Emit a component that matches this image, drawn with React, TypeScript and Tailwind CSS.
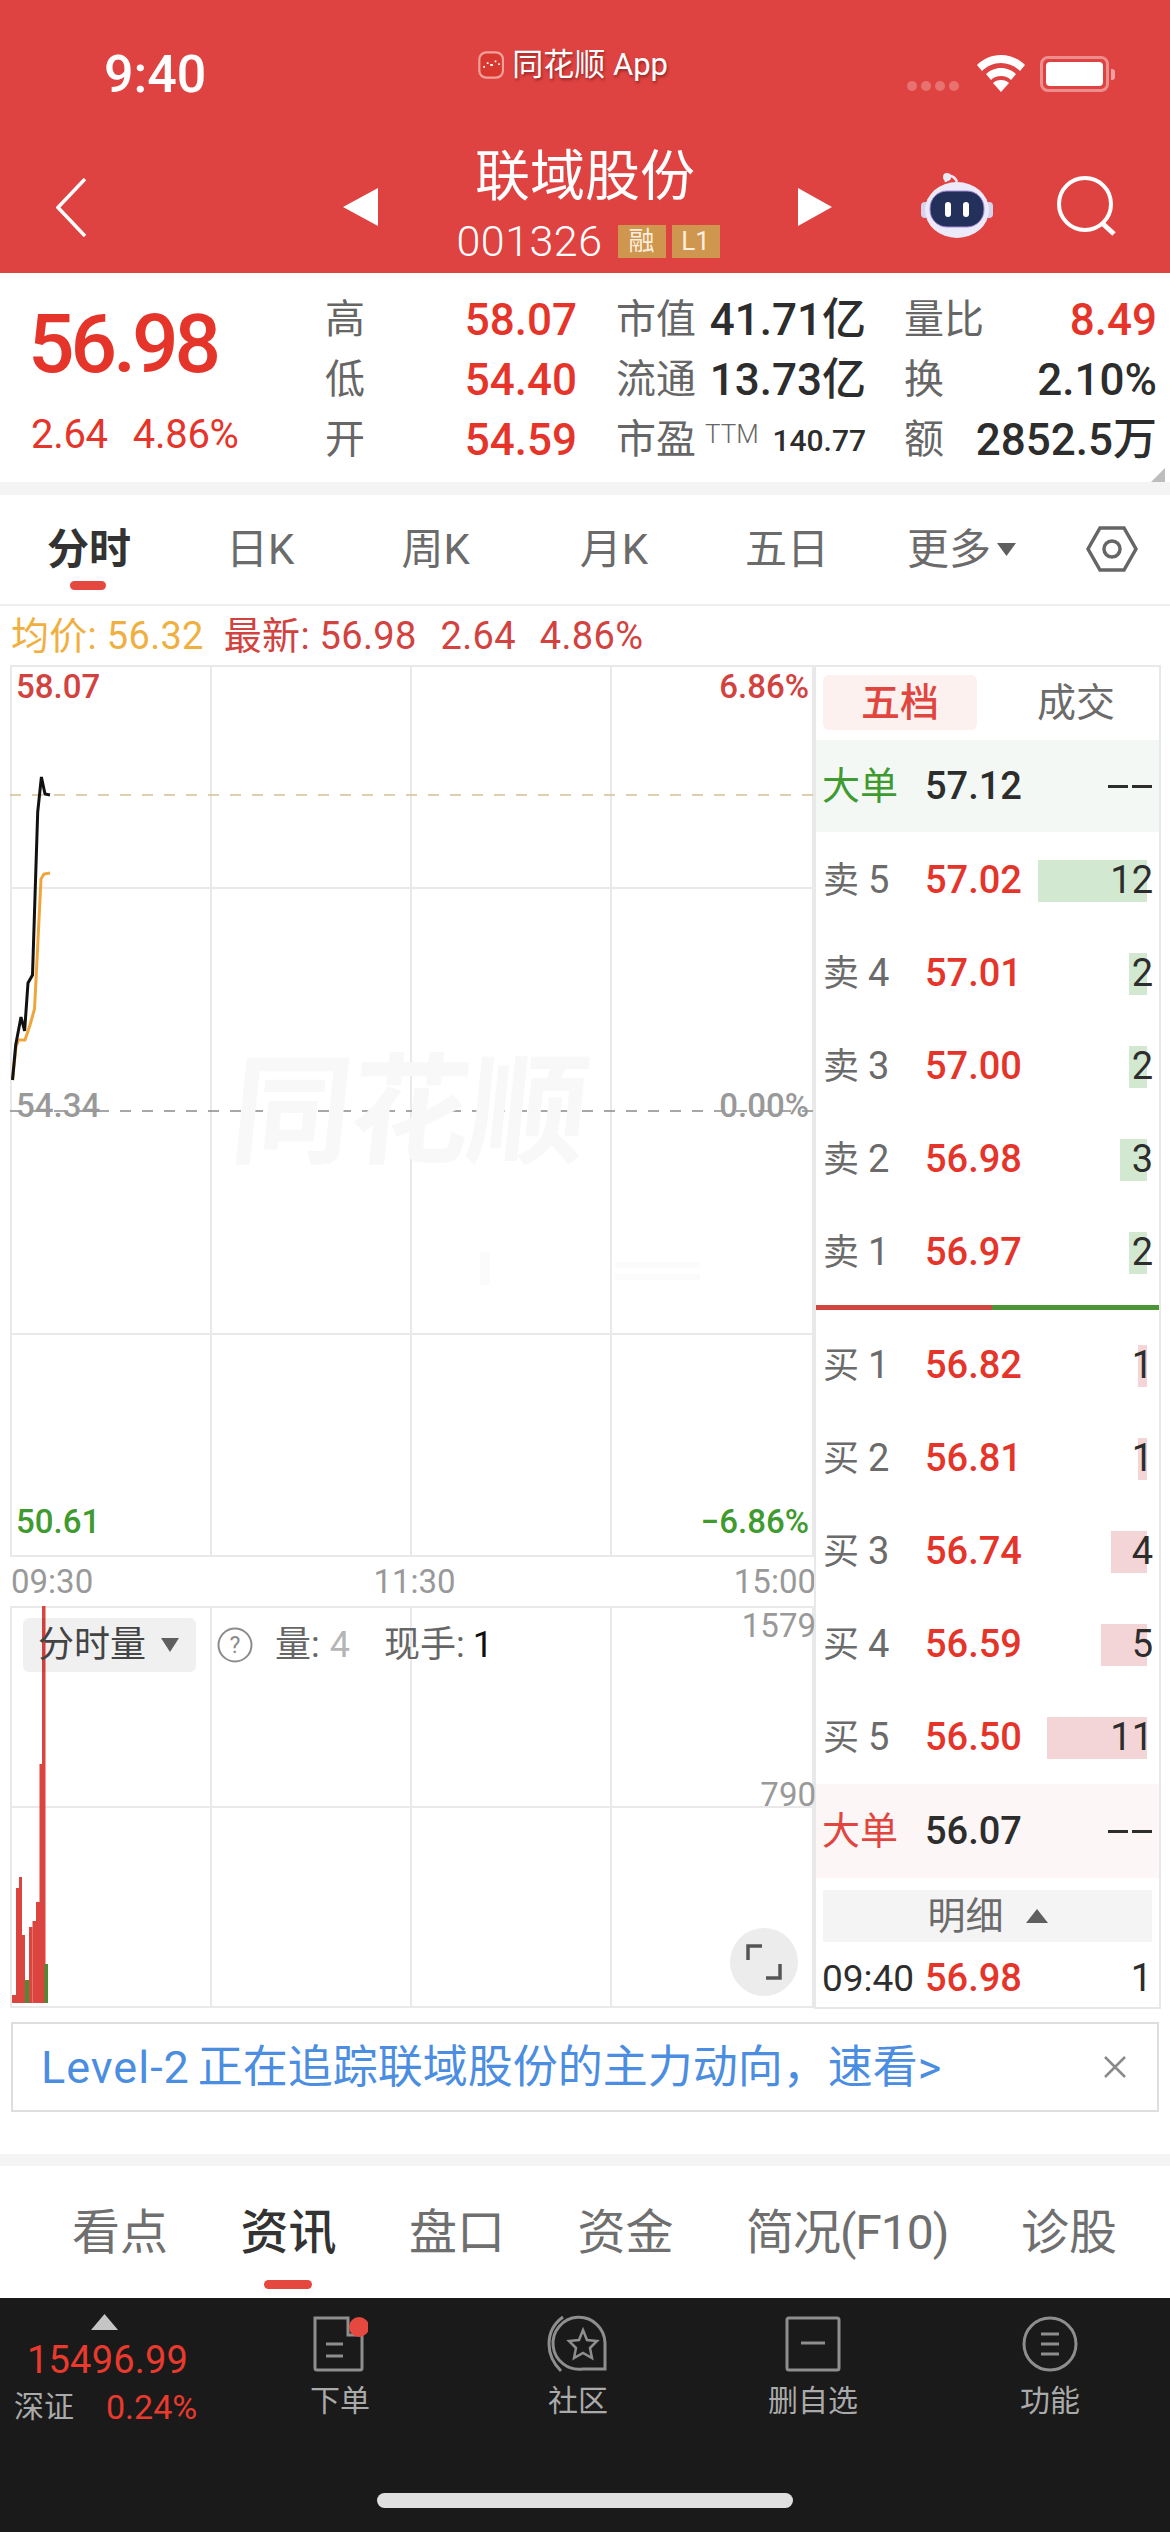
const sans = "font-['Roboto','Noto_Sans_CJK_SC',sans-serif]";

const sells = [
  { label: "卖", n: "5", price: "57.02", vol: "12", bar: 109 },
  { label: "卖", n: "4", price: "57.01", vol: "2", bar: 18 },
  { label: "卖", n: "3", price: "57.00", vol: "2", bar: 18 },
  { label: "卖", n: "2", price: "56.98", vol: "3", bar: 27 },
  { label: "卖", n: "1", price: "56.97", vol: "2", bar: 18 },
];

const buys = [
  { label: "买", n: "1", price: "56.82", vol: "1", bar: 9 },
  { label: "买", n: "2", price: "56.81", vol: "1", bar: 9 },
  { label: "买", n: "3", price: "56.74", vol: "4", bar: 36 },
  { label: "买", n: "4", price: "56.59", vol: "5", bar: 46 },
  { label: "买", n: "5", price: "56.50", vol: "11", bar: 100 },
];

const volumeBars = [
  { x: 12, w: 4.5, top: 1995, c: "#dc4440" },
  { x: 16, w: 4, top: 1888, c: "#dc4440" },
  { x: 19, w: 3, top: 1877, c: "#dc4440" },
  { x: 21.5, w: 3.5, top: 1935, c: "#dc4440" },
  { x: 25, w: 4, top: 1980, c: "#4d8a35" },
  { x: 29, w: 3.5, top: 1927, c: "#dc4440" },
  { x: 32.5, w: 3.5, top: 1921, c: "#dc4440" },
  { x: 36, w: 4, top: 1902, c: "#dc4440" },
  { x: 39.5, w: 3.5, top: 1764, c: "#dc4440" },
  { x: 42, w: 3.5, top: 1606, c: "#dc4440" },
  { x: 44.5, w: 3.5, top: 1964, c: "#4d8a35" },
];

function BookRow({ row, green }: { row: (typeof sells)[number]; green: boolean }) {
  return (
    <div className="relative flex h-[93px] items-center pl-[7px]">
      <div
        className={`absolute right-[12px] top-[26px] h-[42px] ${green ? "bg-[#d3e8d0]" : "bg-[#f3d5d7]"}`}
        style={{ width: row.bar }}
      />
      <span className="relative w-[102px] text-[36px] text-[#6b6b6b]">
        {row.label}
        <span className="ml-[9px] text-[38px]">{row.n}</span>
      </span>
      <span className="relative text-[38px] font-medium text-[#e5352b]">{row.price}</span>
      <span className="relative ml-auto pr-[6px] text-[38px] text-[#2d2d2d]">{row.vol}</span>
    </div>
  );
}

function BigOrder({ label, price, className, labelColor }: { label: string; price: string; className: string; labelColor: string }) {
  return (
    <div className={`flex items-center pl-[6px] ${className}`}>
      <span className={`w-[103px] text-[38px] ${labelColor}`}>{label}</span>
      <span className="text-[38px] font-medium text-[#2d2d2d]">{price}</span>
      <div className="ml-auto flex gap-[4px] pr-[7px]">
        <div className="h-[3px] w-[20px] bg-[#2d2d2d]" />
        <div className="h-[3px] w-[20px] bg-[#2d2d2d]" />
      </div>
    </div>
  );
}

function OrderBook() {
  return (
    <div className="flex w-[347px] flex-col border-r-2 border-t-2 border-b-2 border-[#e8e8e8] border-l-2">
      <div className="flex h-[73px] pl-[7px] pt-[8px]">
        <div className="flex h-[55px] w-[154px] items-center justify-center rounded-[6px] bg-[#fdf1ef] text-[39px] font-medium text-[#e0463f]">
          五档
        </div>
        <div className="flex h-[55px] flex-1 items-center justify-center pl-[16px] text-[39px] text-[#6b6b6b]">成交</div>
      </div>
      <BigOrder label="大单" price="57.12" className="h-[92px] bg-[#f3f8f5]" labelColor="text-[#3f9a2f]" />
      <div className="pt-[2px]">
        {sells.map((r) => (
          <BookRow key={r.n} row={r} green />
        ))}
      </div>
      <div className="mt-[6px] flex h-[5px]">
        <div className="w-[176px] bg-[#d2453f]" />
        <div className="flex-1 bg-[#4a9535]" />
      </div>
      <div className="pt-[9px]">
        {buys.map((r) => (
          <BookRow key={r.n} row={r} green={false} />
        ))}
      </div>
      <BigOrder label="大单" price="56.07" className="h-[94px] bg-[#fdf6f6]" labelColor="text-[#e0463f]" />
      <div className="mx-[7px] mt-[12px] flex h-[52px] items-center justify-center gap-[22px] bg-[#f4f4f4] text-[38px] text-[#6b6b6b]">
        <span>明细</span>
        <svg width="22" height="14" viewBox="0 0 22 14"><path d="M11 0 22 14H0z" fill="#5f5f5f" /></svg>
      </div>
      <div className="flex flex-1 items-center pl-[6px] pt-[8px] text-[37px]">
        <span className="w-[103px] text-[#2d2d2d]">09:40</span>
        <span className="text-[38px] font-medium text-[#e5352b]">56.98</span>
        <span className="ml-auto pr-[7px] text-[38px] text-[#2d2d2d]">1</span>
      </div>
    </div>
  );
}

function PriceChart() {
  return (
    <div className="relative h-[892px]">
      <svg className="block" width="804" height="892" viewBox="10 665 804 892">
        <g stroke="#e9e9e9" strokeWidth="2" fill="none">
          <rect x="11" y="666" width="802" height="890" />
          <path d="M211 665V1557M411 665V1557M611 665V1557M10 888H814M10 1334H814" />
        </g>
        <path d="M480 1252h10v33h-10zM615 1262h85v6h-85zM615 1274h85v6h-85z" fill="#fbfbfb" />
        <path d="M10 795H814" stroke="#d4c096" strokeWidth="1.5" strokeDasharray="11 11" />
        <path d="M10 1111H814" stroke="#8a8a8a" strokeWidth="1.5" strokeDasharray="11 11" />
        <path
          d="M12.5 1080 16 1047 18.5 1040 25 1040 30 1025 34.5 1009 37 960 41 879 44 874 50 873"
          fill="none"
          stroke="#eea63c"
          strokeWidth="3"
        />
        <path
          d="M12.5 1080 15.7 1045 21 1017 24.6 1031 28 983 32.5 975 37.7 812 41.4 777 45 794 50 795"
          fill="none"
          stroke="#111"
          strokeWidth="3"
        />
      </svg>
      <div className="absolute left-[222px] top-[388px] skew-x-[-6deg] text-[120px] font-bold leading-none tracking-[-2px] text-[#f8f8f8]">
        同花顺
      </div>
      <span className="absolute left-[6px] top-[2px] text-[33px] font-medium leading-[40px] text-[#d2423f]">58.07</span>
      <span className="absolute right-[5px] top-[2px] text-[33px] font-medium leading-[40px] text-[#d2423f]">6.86%</span>
      <span className="absolute left-[6px] top-[421px] text-[33px] font-medium leading-[40px] text-[#999]">54.34</span>
      <span className="absolute right-[5px] top-[421px] text-[33px] font-medium leading-[40px] text-[#999]">0.00%</span>
      <span className="absolute left-[6px] top-[837px] text-[33px] font-medium leading-[40px] text-[#3f9a2f]">50.61</span>
      <span className="absolute right-[5px] top-[837px] text-[33px] font-medium leading-[40px] text-[#3f9a2f]">−6.86%</span>
    </div>
  );
}

function VolumeChart() {
  return (
    <div className="relative h-[402px]">
      <svg className="block" width="804" height="402" viewBox="10 1606 804 402">
        <g stroke="#e9e9e9" strokeWidth="2" fill="none">
          <rect x="11" y="1607" width="802" height="400" />
          <path d="M211 1606V2008M411 1606V2008M611 1606V2008M10 1807H814" />
        </g>
        {volumeBars.map((b) => (
          <rect key={b.x} x={b.x} y={b.top} width={b.w} height={2003 - b.top} fill={b.c} />
        ))}
      </svg>
      <div className="absolute left-[13px] top-[12px] flex h-[54px] w-[173px] items-center gap-[15px] rounded-[6px] bg-[#000]/[0.06] pl-[15px] text-[36px] text-[#444]">
        <span>分时量</span>
        <svg width="18" height="14" viewBox="0 0 18 14"><path d="M0 0H18L9 14z" fill="#5f5f5f" /></svg>
      </div>
      <div className="absolute left-[207px] top-[19px] flex items-center text-[36px] leading-[40px] text-[#666]">
        <svg width="36" height="36" viewBox="0 0 36 36">
          <circle cx="18" cy="18" r="16.5" fill="none" stroke="#8c8c8c" strokeWidth="2" />
          <text x="18" y="26" fontSize="23" textAnchor="middle" fill="#8c8c8c">?</text>
        </svg>
        <span className="ml-[22px]">量:</span>
        <span className="ml-[10px] text-[#b5b5b5]">4</span>
        <span className="ml-[34px]">现手:</span>
        <span className="ml-[8px] text-[#111]">1</span>
      </div>
      <span className="absolute right-[-2px] top-[0px] text-[33px] leading-[40px] text-[#999]">1579</span>
      <span className="absolute right-[-2px] top-[169px] text-[33px] leading-[40px] text-[#999]">790</span>
      <div className="absolute left-[720px] top-[322px] flex h-[68px] w-[68px] items-center justify-center rounded-full bg-[#ececec]">
        <svg width="36" height="36" viewBox="0 0 36 36" fill="none" stroke="#555" strokeWidth="3.5">
          <path d="M2 16V2H16M34 20V34H20" />
        </svg>
      </div>
    </div>
  );
}

function StatusBar() {
  return (
    <div className="flex h-[136px]">
      <span className="ml-[104px] mt-[45px] h-[60px] w-[102px] shrink-0 whitespace-nowrap text-[52px] font-medium leading-[60px] text-white">9:40</span>
      <div className="ml-[272px] mt-[47px] flex h-[36px] w-[190px] shrink-0 items-center gap-[8px] text-white">
        <svg width="30" height="32" viewBox="0 0 30 32">
          <rect x="1.5" y="1.5" width="27" height="29" rx="8" fill="#d8382f" stroke="#f3a09b" strokeWidth="2.5" />
          <path d="M6 18h2M10 14h2M14 16h3M19 12h2M23 15h2" stroke="#fff" strokeWidth="2" />
        </svg>
        <span className="whitespace-nowrap text-[31px] [text-shadow:1px_2px_3px_rgba(90,20,20,0.6)]">同花顺 App</span>
      </div>
      <div className="ml-[239px] mt-[81px] flex h-[10px] gap-[4px]">
        <i className="h-[10px] w-[10px] rounded-full bg-white/25" />
        <i className="h-[10px] w-[10px] rounded-full bg-white/25" />
        <i className="h-[10px] w-[10px] rounded-full bg-white/25" />
        <i className="h-[10px] w-[10px] rounded-full bg-white/25" />
      </div>
      <svg className="ml-[17px] mt-[55px]" width="50" height="37" viewBox="0 0 50 37" fill="#fff">
        <path d="M25 0C15.5 0 7 4 1 10l5 6c5-5 11.500-8 19-8s14 3 19 8l5-6C43 4 34.500 0 25 0z" />
        <path d="M25 13c-6 0-11 2.500-15 6l5 6c2.500-2.500 6-4 10-4s7.500 1.500 10 4l5-6c-4-3.500-9-6-15-6z" />
        <path d="M25 25c-3.500 0-6 1-8 3l8 9 8-9c-2-2-4.500-3-8-3z" />
      </svg>
      <div className="ml-[14px] mt-[56px] flex h-[36px] items-center">
        <div className="h-[36px] w-[69px] rounded-[8px] border-[3px] border-white/40 p-[3px]">
          <div className="h-full w-full rounded-[4px] bg-white" />
        </div>
        <div className="ml-[2px] h-[11px] w-[4px] rounded-r-[3px] bg-white/50" />
      </div>
    </div>
  );
}

function NavBar() {
  return (
    <div className="flex h-[137px]">
      <svg className="ml-[56px] mt-[42px]" width="30" height="59" viewBox="0 0 30 59" fill="none" stroke="#fff" strokeWidth="3.5">
        <path d="M29 1 2 29.500 29 58" />
      </svg>
      <svg className="ml-[257px] mt-[52px]" width="35" height="38" viewBox="0 0 35 38" fill="#fff">
        <path d="M35 0V38L0 19z" />
      </svg>
      <div className="flex w-[420px] flex-col items-center text-white">
        <span className="-ml-[6px] h-[76px] pt-[6px] text-[55px] leading-[68px]">联域股份</span>
        <div className="mt-[13px] flex h-[33px] items-center">
          <span className="text-[43px] font-light leading-[33px] tracking-[0.5px]">001326</span>
          <span className="ml-[15px] flex h-[33px] w-[48px] shrink-0 items-center justify-center bg-[#cf9650] text-[26px] text-[#fbeedd]">融</span>
          <span className="ml-[6px] flex h-[33px] w-[48px] shrink-0 items-center justify-center bg-[#cf9650] text-[26px] text-[#fbeedd]">L1</span>
        </div>
      </div>
      <svg className="mt-[52px]" width="34" height="38" viewBox="0 0 34 38" fill="#fff">
        <path d="M0 0V38L34 19z" />
      </svg>
      <svg className="ml-[89px] mt-[36px]" width="72" height="66" viewBox="0 0 72 66">
        <path d="M25 10C24 5 27 3 30 4s5 3 6 6" fill="none" stroke="#e8e6f5" strokeWidth="2.5" />
        <circle cx="26" cy="5" r="4" fill="#eceaf6" />
        <rect x="0" y="30" width="8" height="16" rx="4" fill="#d5d3ee" />
        <rect x="64" y="30" width="8" height="16" rx="4" fill="#d5d3ee" />
        <ellipse cx="36" cy="38" rx="32" ry="28" fill="#eceaf8" />
        <rect x="9" y="19" width="54" height="36" rx="17" fill="#22305a" stroke="#a78bdc" strokeWidth="1" />
        <rect x="24" y="30" width="6" height="15" rx="3" fill="#fff" />
        <rect x="42" y="30" width="6" height="15" rx="3" fill="#fff" />
      </svg>
      <svg className="ml-[63px] mt-[40px]" width="62" height="60" viewBox="0 0 62 60" fill="none" stroke="#fff">
        <circle cx="29" cy="28" r="26" strokeWidth="4" />
        <path d="M46 47 58 58" strokeWidth="5" />
      </svg>
    </div>
  );
}

function StatRow({ children }: { children: React.ReactNode }) {
  return <div className="grid h-[60px] grid-cols-[291px_288px_253px] items-center">{children}</div>;
}

function QuoteInfo() {
  const label = "text-[40px] text-[#666]";
  const red = "text-[44px] font-medium text-[#e5352b]";
  const dark = "text-[44px] font-medium text-[#2d2d2d]";
  const cell = "flex items-center justify-between whitespace-nowrap";
  return (
    <div className="relative flex h-[209px] bg-white">
      <div className="w-[325px] shrink-0 pl-[31px]">
        <div className="-ml-[3px] mt-[29px] text-[82px] font-medium leading-[84px] tracking-[-4px] text-[#e5352b]">56.98</div>
        <div className="mt-[25px] flex gap-[25px] text-[40px] leading-[48px] tracking-[-0.3px] text-[#e5352b]">
          <span>2.64</span>
          <span>4.86%</span>
        </div>
      </div>
      <div className="pt-[14px]">
        <StatRow>
          <div className={`${cell} w-[252px]`}><span className={label}>高</span><span className={red}>58.07</span></div>
          <div className={`${cell} w-[250px]`}><span className={label}>市值</span><span className={dark}>41.71亿</span></div>
          <div className={`${cell} w-[253px]`}><span className={label}>量比</span><span className={red}>8.49</span></div>
        </StatRow>
        <StatRow>
          <div className={`${cell} w-[252px]`}><span className={label}>低</span><span className={red}>54.40</span></div>
          <div className={`${cell} w-[250px]`}><span className={label}>流通</span><span className={dark}>13.73亿</span></div>
          <div className={`${cell} w-[253px]`}><span className={label}>换</span><span className={dark}>2.10%</span></div>
        </StatRow>
        <StatRow>
          <div className={`${cell} w-[252px]`}><span className={label}>开</span><span className={red}>54.59</span></div>
          <div className={`${cell} w-[250px]`}>
            <span className={label}>
              市盈
              <span className="ml-[9px] align-[10px] text-[26px] font-light">TTM</span>
            </span>
            <span className="text-[30px] font-medium text-[#2d2d2d]">140.77</span>
          </div>
          <div className={`${cell} w-[253px]`}><span className={label}>额</span><span className={dark}>2852.5万</span></div>
        </StatRow>
      </div>
      <div className="absolute bottom-0 right-[5px] h-0 w-0 border-b-[14px] border-l-[14px] border-b-[#bdbdbd] border-l-transparent" />
    </div>
  );
}

function ChartTabs() {
  const tabs = [
    { t: "日K", w: "ml-[95px]" },
    { t: "周K", w: "ml-[107px]" },
    { t: "月K", w: "ml-[110px]" },
    { t: "五日", w: "ml-[97px]" },
  ];
  return (
    <div className="flex h-[111px] items-center border-b-2 border-[#eeeeee] text-[#6b6b6b]">
      <div className="relative ml-[47px] text-[42px] font-bold text-[#333]">
        分时
        <div className="absolute left-[23px] top-[63px] h-[9px] w-[36px] rounded-full bg-[#e4483f]" />
      </div>
      {tabs.map((tab) => (
        <span key={tab.t} className={`${tab.w} text-[42px]`}>{tab.t}</span>
      ))}
      <span className="ml-[78px] text-[42px]">更多</span>
      <svg className="ml-[6px]" width="19" height="13" viewBox="0 0 19 13"><path d="M0 0H19L9.500 13z" fill="#5f5f5f" /></svg>
      <svg className="ml-[70px]" width="52" height="46" viewBox="0 0 52 46" fill="none" stroke="#666" strokeWidth="3.5">
        <path d="M14 2H38L50 23 38 44H14L2 23z" />
        <circle cx="26" cy="23" r="8" />
      </svg>
    </div>
  );
}

function BottomBar() {
  return (
    <div className="flex h-[234px] flex-col bg-[#1a1a1a]">
      <div className="flex h-[195px]">
        <div className="w-[240px] shrink-0 pt-[16px]">
          <svg className="ml-[91px]" width="27" height="16" viewBox="0 0 27 16"><path d="M13.500 0 27 16H0z" fill="#c5c5c5" /></svg>
          <div className="mt-[7px] pl-[27px] text-[38px] leading-[46px] tracking-[0.2px] text-[#ea3a2e]">15496.99</div>
          <div className="mt-[2px] flex items-center pl-[14px] leading-[44px]">
            <span className="text-[30px] text-[#aaaaaa]">深证</span>
            <span className="ml-[32px] text-[34px] text-[#ea3a2e]">0.24%</span>
          </div>
        </div>
        <NavItem label="下单" width="w-[200px]">
          <svg width="56" height="58" viewBox="0 0 56 58" fill="none" stroke="#8e8e8e" strokeWidth="3">
            <path d="M3 3H36V20H50V53a2 2 0 0 1-2 2H5a2 2 0 0 1-2-2z" />
            <path d="M14 29H31M14 41H31" />
            <circle cx="47" cy="12" r="10" fill="#e4483f" stroke="none" />
          </svg>
        </NavItem>
        <NavItem label="社区" width="w-[276px]">
          <svg width="62" height="58" viewBox="0 0 62 58" fill="none" stroke="#8e8e8e" strokeWidth="3">
            <path d="M16 2C5 10 2 20 2 29c0 10 4 19 12 27" />
            <path d="M58 54H36A26 26 0 1 1 58 28z" />
            <path d="M36 15 40 25 50 26 43 33 45 43 36 38 27 43 29 33 22 26 32 25z" strokeWidth="2.5" />
          </svg>
        </NavItem>
        <NavItem label="删自选" width="w-[194px]">
          <svg width="58" height="56" viewBox="0 0 58 56" fill="none" stroke="#8e8e8e" strokeWidth="3">
            <rect x="3" y="2" width="52" height="52" rx="2" />
            <path d="M17 27H41" />
          </svg>
        </NavItem>
        <NavItem label="功能" width="w-[280px]">
          <svg width="56" height="56" viewBox="0 0 56 56" fill="none" stroke="#8e8e8e" strokeWidth="3">
            <circle cx="28" cy="28" r="26" />
            <path d="M19 18H37M19 28H37M19 38H37" />
          </svg>
        </NavItem>
      </div>
      <div className="mx-auto h-[15px] w-[416px] rounded-full bg-[#e0e0e0]" />
    </div>
  );
}

function NavItem({ label, width, children }: { label: string; width: string; children: React.ReactNode }) {
  return (
    <div className={`flex shrink-0 flex-col items-center pt-[17px] ${width}`}>
      <div className="flex h-[58px] items-center">{children}</div>
      <span className="mt-[6px] text-[30px] leading-[44px] text-[#aaaaaa]">{label}</span>
    </div>
  );
}

function BottomTabs() {
  const tabs = ["看点", "资讯", "盘口", "资金", "简况(F10)", "诊股"];
  return (
    <div className="flex h-[132px] items-start justify-between bg-white pl-[72px] pr-[53px] pt-[39px]">
      {tabs.map((t) => (
        <div
          key={t}
          className={`relative text-[48px] leading-[56px] ${t === "资讯" ? "font-medium text-[#333]" : "text-[#6f6f6f]"} ${t === "简况(F10)" ? "tracking-[-1px]" : ""}`}
        >
          {t}
          {t === "资讯" && <div className="absolute left-[24px] top-[75px] h-[9px] w-[48px] rounded-full bg-[#e4483f]" />}
        </div>
      ))}
    </div>
  );
}

export default function App() {
  return (
    <div className={`flex h-[2532px] w-[1170px] flex-col overflow-hidden bg-white ${sans}`}>
      <div className="h-[273px] shrink-0 bg-[#df4341]">
        <StatusBar />
        <NavBar />
      </div>
      <QuoteInfo />
      <div className="h-[13px] shrink-0 bg-[#f4f4f4]" />
      <ChartTabs />
      <div className="flex h-[60px] items-center gap-[20px] pl-[11px] pt-[2px] text-[38px] tracking-[0.3px]">
        <span className="text-[#efb041]">均价: 56.32</span>
        <div className="flex gap-[24px] text-[#d2423f]">
          <span>最新: 56.98</span>
          <span>2.64</span>
          <span>4.86%</span>
        </div>
      </div>
      <div className="flex pl-[10px]">
        <div className="w-[804px]">
          <PriceChart />
          <div className="flex h-[49px] items-center justify-between text-[33px] text-[#999]">
            <span className="ml-[1px]">09:30</span>
            <span className="ml-[2px]">11:30</span>
            <span className="-mr-[2px]">15:00</span>
          </div>
          <VolumeChart />
        </div>
        <OrderBook />
      </div>
      <div className="mx-[11px] mt-[13px] flex h-[90px] shrink-0 items-center border-2 border-[#dedede] pl-[28px] pr-[30px] text-[45px] text-[#4b8de0]">
        <span className="whitespace-nowrap tracking-[1px]">Level-2</span>
        <span className="ml-[8px] whitespace-nowrap">正在追踪联域股份的主力动向，速看&gt;</span>
        <svg className="ml-auto" width="24" height="24" viewBox="0 0 24 24" stroke="#8a8a8a" strokeWidth="2.5"><path d="M2 2 22 22M22 2 2 22" /></svg>
      </div>
      <div className="mt-[42px] h-[12px] shrink-0 bg-[#f4f4f4]" />
      <BottomTabs />
      <BottomBar />
    </div>
  );
}
